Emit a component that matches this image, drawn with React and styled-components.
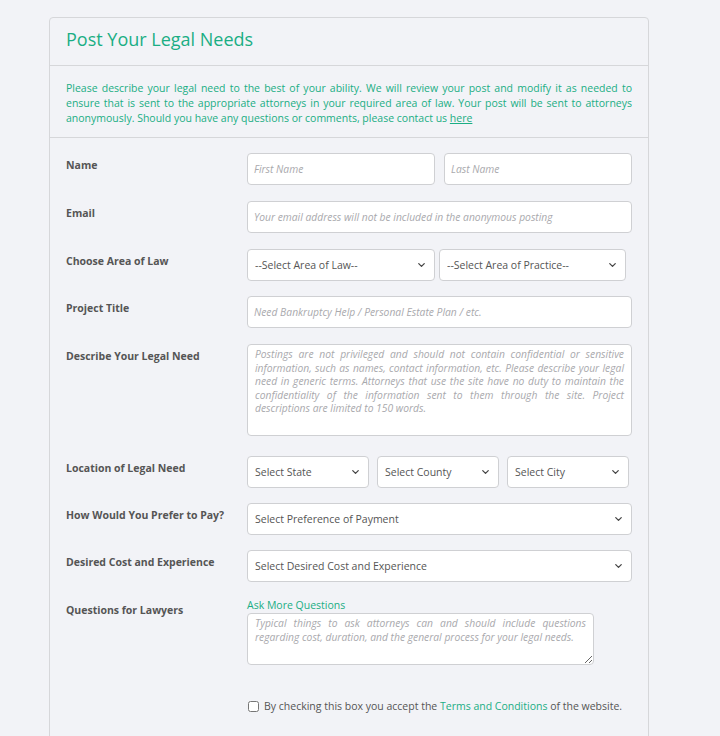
import React from 'react';
import styled, { createGlobalStyle } from 'styled-components';
import { ChevronDown } from 'lucide-react';

const GlobalStyle = createGlobalStyle`
  body {
    margin: 0;
    background: #f2f3f7;
    font-family: "Open Sans", "Noto Sans", sans-serif;
    color: #555;
  }
`;

const green = '#1aae84';

const Panel = styled.div`
  margin: 17px 0 0 49px;
  width: 598px;
  border: 1px solid #d6d7da;
  border-radius: 4px;
  background: #f2f3f7;
`;

const Header = styled.div`
  padding: 8px 16px 13px;
  border-bottom: 1px solid #d6d7da;
`;

const Title = styled.h2`
  margin: 0;
  font-size: 18px;
  font-weight: 400;
  line-height: 26px;
  color: ${green};
`;

const Intro = styled.p`
  margin: 0;
  padding: 15px 16px 11px;
  font-size: 10.5px;
  line-height: 15px;
  color: ${green};
  text-align: justify;
  border-bottom: 1px solid #d6d7da;

  a { color: ${green}; text-decoration: underline; }
`;

const Form = styled.form`
  padding: 15px 16px 40px;
  display: flex;
  flex-direction: column;
  gap: 16px;
`;

const Row = styled.div`
  display: grid;
  grid-template-columns: 181px 385px;
  margin-top: ${p => p.$shift || 0}px;
`;

const Label = styled.label`
  font-size: 10.5px;
  font-weight: 700;
  line-height: 15px;
  padding-top: 5px;
  color: #555;
`;

const Controls = styled.div`
  display: flex;
  gap: ${p => p.$gap || 8}px;
`;

const Stack = styled.div`
  display: flex;
  flex-direction: column;
`;

const Input = styled.input`
  box-sizing: border-box;
  flex: 1;
  min-width: 0;
  height: 32px;
  padding: 0 6px;
  border: 1px solid #cfd0d3;
  border-radius: 4px;
  background: #fff;
  font-family: inherit;
  font-size: 10.3px;
  outline: none;

  &::placeholder { color: #a9a9ad; font-style: italic; }
`;

const TextArea = styled.textarea`
  box-sizing: border-box;
  display: block;
  width: ${p => p.$width || 385}px;
  height: ${p => p.$height}px;
  padding: 3px 7px;
  border: 1px solid #cfd0d3;
  border-radius: 4px;
  background: #fff;
  font-family: inherit;
  font-size: 10.3px;
  line-height: 13.5px;
  text-align: justify;
  resize: ${p => (p.$resize ? 'both' : 'none')};
  outline: none;

  &::placeholder { color: #a9a9ad; font-style: italic; }
`;

const SelectWrap = styled.div`
  position: relative;
  width: ${p => (p.$width ? `${p.$width}px` : 'auto')};
  flex: ${p => (p.$width ? 'none' : 1)};
  height: 32px;

  svg {
    position: absolute;
    right: 8px;
    top: 50%;
    transform: translateY(-50%);
    pointer-events: none;
    color: #444;
  }
`;

const SelectBox = styled.select`
  box-sizing: border-box;
  width: 100%;
  height: 100%;
  appearance: none;
  padding: 0 22px 0 7px;
  border: 1px solid #cfd0d3;
  border-radius: 4px;
  background: #fff;
  font-family: inherit;
  font-size: 10.5px;
  color: #555;
  outline: none;
`;

const LinkText = styled.a`
  color: ${green};
  font-size: 10.5px;
  line-height: 15px;
  text-decoration: none;
`;

const CheckRow = styled.label`
  margin: 18px 0 0 181px;
  display: flex;
  align-items: center;
  gap: 5px;
  font-size: 10.5px;
  color: #555;
  white-space: nowrap;

  input { margin: 0 0 0 1px; width: 11px; height: 11px; }
  a { color: ${green}; text-decoration: none; }
`;

const Select = ({ children, width }) => (
  <SelectWrap $width={width}>
    <SelectBox defaultValue="">
      <option value="">{children}</option>
    </SelectBox>
    <ChevronDown size={11} strokeWidth={2.75} />
  </SelectWrap>
);

export default function App() {
  return (
    <>
      <GlobalStyle />
      <Panel>
        <Header>
          <Title>Post Your Legal Needs</Title>
        </Header>
        <Intro>
          Please describe your legal need to the best of your ability. We will review your post and modify it as needed to
          ensure that is sent to the appropriate attorneys in your required area of law. Your post will be sent to attorneys
          anonymously. Should you have any questions or comments, please contact us <a href="#">here</a>
        </Intro>
        <Form>
          <Row>
            <Label>Name</Label>
            <Controls $gap={9}>
              <Input placeholder="First Name" />
              <Input placeholder="Last Name" />
            </Controls>
          </Row>
          <Row>
            <Label>Email</Label>
            <Controls>
              <Input placeholder="Your email address will not be included in the anonymous posting" />
            </Controls>
          </Row>
          <Row>
            <Label>Choose Area of Law</Label>
            <Controls $gap={4}>
              <Select width={188}>--Select Area of Law--</Select>
              <Select width={187}>--Select Area of Practice--</Select>
            </Controls>
          </Row>
          <Row $shift={-1}>
            <Label>Project Title</Label>
            <Controls>
              <Input placeholder="Need Bankruptcy Help / Personal Estate Plan / etc." />
            </Controls>
          </Row>
          <Row>
            <Label>Describe Your Legal Need</Label>
            <TextArea
              $height={92}
              placeholder="Postings are not privileged and should not contain confidential or sensitive information, such as names, contact information, etc. Please describe your legal need in generic terms. Attorneys that use the site have no duty to maintain the confidentiality of the information sent to them through the site. Project descriptions are limited to 150 words."
            />
          </Row>
          <Row $shift={4}>
            <Label>Location of Legal Need</Label>
            <Controls>
              <Select width={122}>Select State</Select>
              <Select width={122}>Select County</Select>
              <Select width={122}>Select City</Select>
            </Controls>
          </Row>
          <Row $shift={-1}>
            <Label>How Would You Prefer to Pay?</Label>
            <Controls>
              <Select>Select Preference of Payment</Select>
            </Controls>
          </Row>
          <Row $shift={-1}>
            <Label>Desired Cost and Experience</Label>
            <Controls>
              <Select>Select Desired Cost and Experience</Select>
            </Controls>
          </Row>
          <Row>
            <Label>Questions for Lawyers</Label>
            <Stack>
              <LinkText href="#">Ask More Questions</LinkText>
              <TextArea
                $width={347}
                $height={52}
                $resize
                placeholder="Typical things to ask attorneys can and should include questions regarding cost, duration, and the general process for your legal needs."
              />
            </Stack>
          </Row>
          <CheckRow>
            <input type="checkbox" />
            <span>
              By checking this box you accept the <a href="#">Terms and Conditions</a> of the website.
            </span>
          </CheckRow>
        </Form>
      </Panel>
    </>
  );
}
